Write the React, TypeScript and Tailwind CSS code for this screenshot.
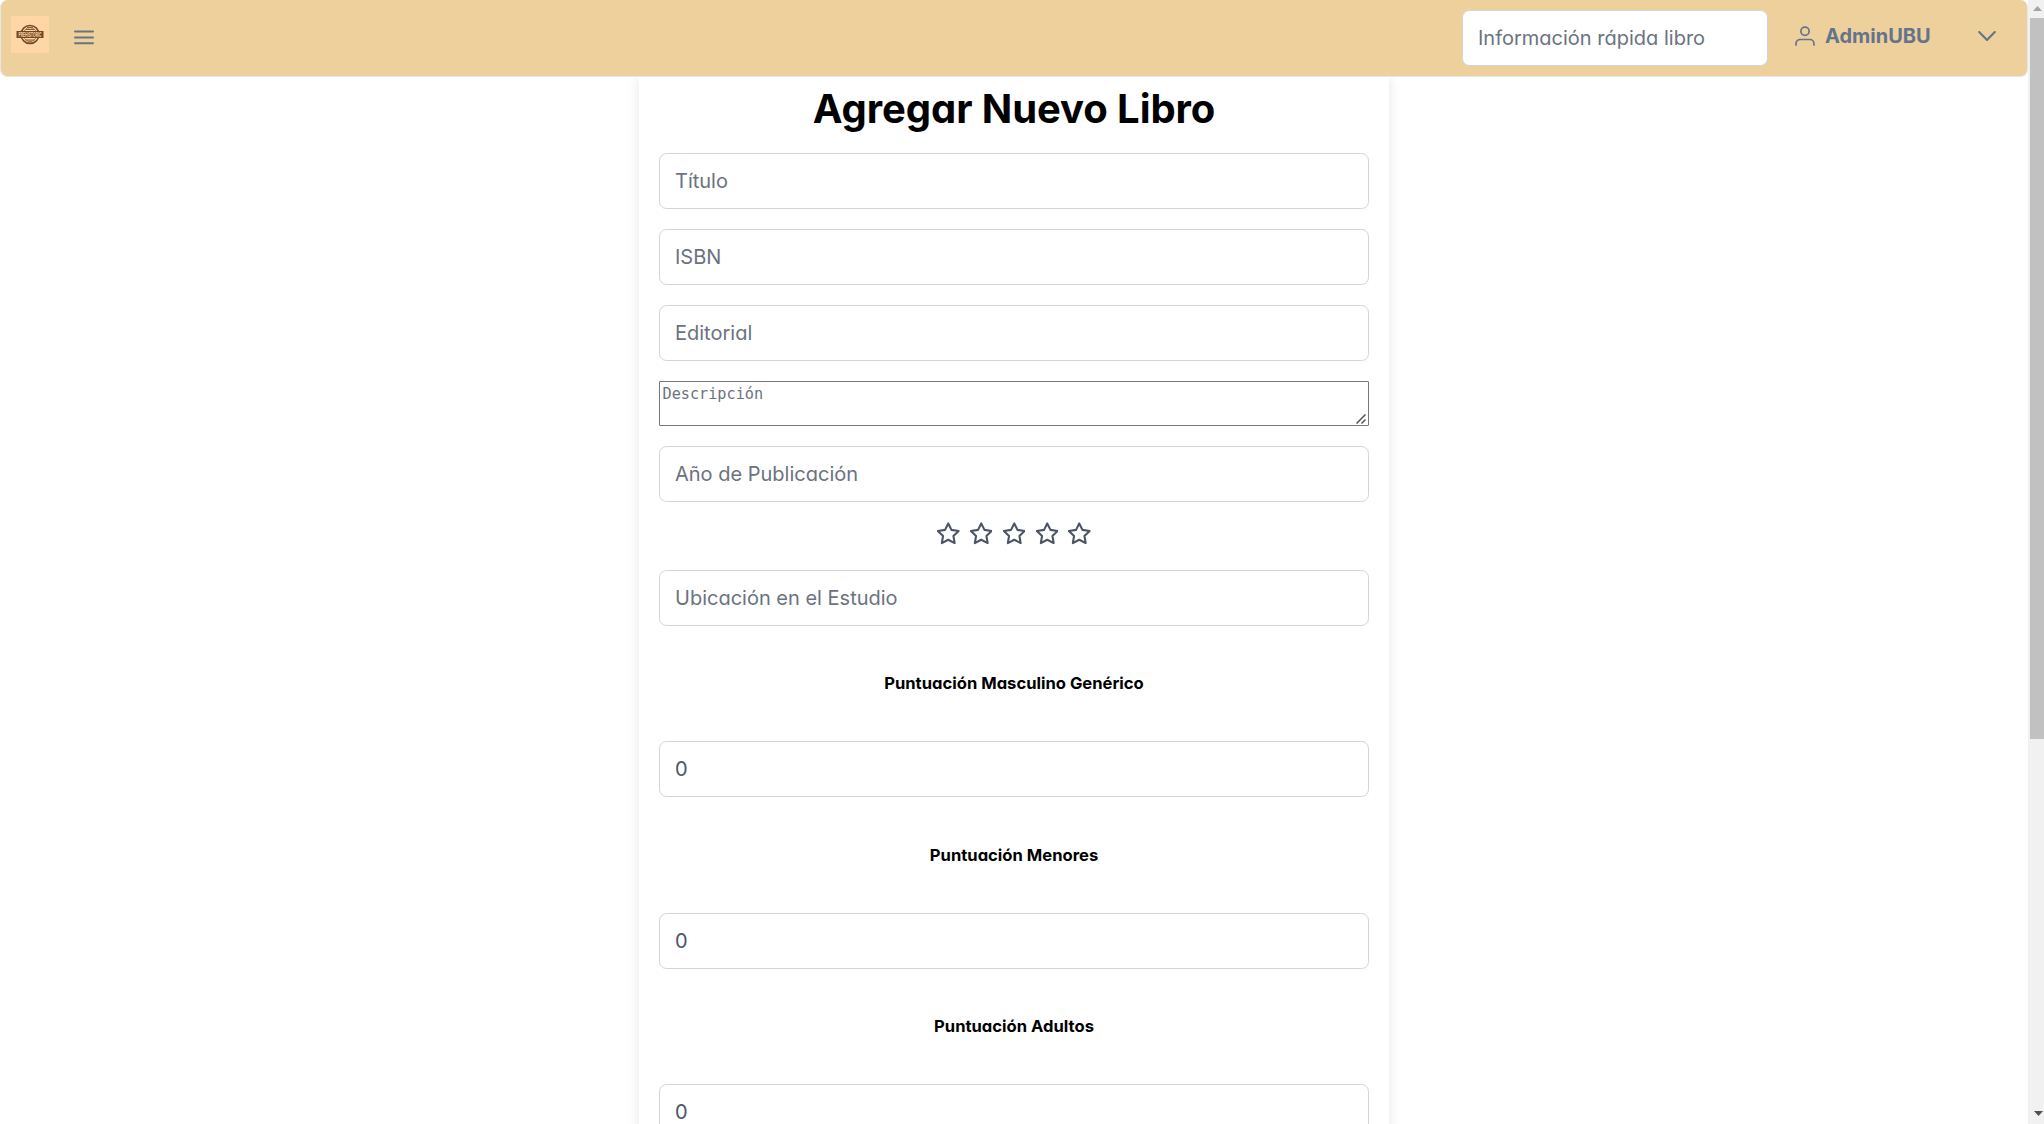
import React from "react";

const inputClass =
  "block h-14 w-full rounded-[7.5px] border border-[#d1d5db] bg-white px-[15px] text-[20px] leading-6 text-[#4b5563] placeholder:text-[#6b7280] outline-none";

function Star() {
  return (
    <svg className="size-[22.5px]" viewBox="0 0 14 14" fill="none" stroke="#4b5563" strokeWidth="1.3" strokeLinejoin="round">
      <path d="M7 .9 9 4.9l4.45.65-3.22 3.13.76 4.42L7 11.02 3.01 13.1l.76-4.42L.55 5.55 5 4.9Z" />
    </svg>
  );
}

function Logo() {
  return (
    <svg className="h-[37px] w-[38px] bg-[#ffd6a5]" viewBox="0 0 38 37" fill="none">
      <circle cx="19" cy="18.5" r="9" stroke="#714625" strokeWidth="1.5" />
      <circle cx="19" cy="18.5" r="6.8" stroke="#a9784d" strokeWidth="1" />
      <path d="M14.5 13.5h9M16 11.5h6M14.5 24h9M17 26h4" stroke="#8a5b35" />
      <path d="M5.5 15h27v7h-27z" fill="#714625" />
      <text transform="translate(19 20.9) scale(.52 1)" textAnchor="middle" fontSize="6.6" fontWeight="700" fill="#ffd6a5">
        PREHISTORIC
      </text>
    </svg>
  );
}

function Header() {
  return (
    <header className="flex h-[77px] w-full shrink-0 items-center rounded-[7.5px] border border-t-0 border-[#e5e7eb] bg-[#eed09d] pb-px text-[#64748b]">
      <div className="mb-[6px] ml-[10px]">
        <Logo />
      </div>
      <svg className="ml-[24.5px] mt-[-2px] h-[20px] w-[20px]" viewBox="0 0 20 20" fill="none" stroke="#6b7280" strokeWidth="2" strokeLinecap="round">
        <path d="M1 4.5h18M1 10.4h18M1 16.2h18" />
      </svg>
      <input className={inputClass + " ml-auto max-w-[306px]"} placeholder="Información rápida libro" />
      <svg className="mb-[3px] ml-[27px] h-[20px] w-[20px]" viewBox="0 0 20 20" fill="none" stroke="currentColor" strokeWidth="1.7" strokeLinecap="round">
        <circle cx="10" cy="5.3" r="4.1" />
        <path d="M1 19v-1.3c0-2.3 1.8-4.2 4.2-4.2h9.6c2.4 0 4.2 1.9 4.2 4.2V19" />
      </svg>
      <span className="mb-[3px] ml-[10px] w-[106px] text-[20px] font-bold leading-6">AdminUBU</span>
      <svg className="mb-[3px] ml-[47px] mr-[31px] h-[18px] w-[18px]" viewBox="0 0 18 18" fill="none" stroke="currentColor" strokeWidth="2.1" strokeLinecap="round" strokeLinejoin="round">
        <path d="m1.2 5 7.8 8 7.8-8" />
      </svg>
    </header>
  );
}

function Score({ label, tall }: { label: string; tall?: boolean }) {
  return (
    <>
      <h5 className={(tall ? "h-[116px]" : "h-[115px] pb-[2px]") + " flex items-center justify-center text-[16.6px] font-bold leading-5 text-black"}>
        {label}
      </h5>
      <input className={inputClass} defaultValue="0" />
    </>
  );
}

function Scrollbar() {
  return (
    <div className="flex h-full w-4 shrink-0 flex-col bg-[#f1f1f1]">
      <svg className="h-[18px] w-4 shrink-0" viewBox="0 0 16 18">
        <path d="M5 11h9L9.5 6Z" fill="#a3a3a3" />
      </svg>
      <div className="ml-[2px] h-[721px] bg-[#c1c1c1]" />
      <svg className="mt-auto h-[18px] w-4 shrink-0" viewBox="0 0 16 18">
        <path d="M6 5h9l-4.5 5Z" fill="#505050" />
      </svg>
    </div>
  );
}

export default function App() {
  return (
    <div className="flex h-[1124px] w-[2044px] overflow-hidden bg-white font-['Inter',sans-serif] [font-feature-settings:'cv02','cv03','cv04','cv11']">
      <div className="flex h-full w-[2028px] flex-col overflow-hidden">
        <Header />
        <div className="min-h-0 flex-1 overflow-hidden">
          <main className="mx-auto h-[1300px] w-[750px] px-5 shadow-[0_0_12.5px_rgba(0,0,0,0.1)]">
            <h1 className="flex h-[76px] items-center justify-center pb-[13px] text-[40px] font-bold leading-[48px] tracking-[-0.07px] text-black">
              Agregar Nuevo Libro
            </h1>
            <div className="flex flex-col gap-5">
              <input className={inputClass} placeholder="Título" />
              <input className={inputClass} placeholder="ISBN" />
              <input className={inputClass} placeholder="Editorial" />
              <div className="relative">
                <textarea
                  className="block h-[45px] w-full resize-none rounded-[1px] border border-[#767676] bg-white px-[2.5px] pt-[1.5px] font-['DejaVu_Sans_Mono',monospace] text-[15.2px] leading-5 placeholder:text-[#6b7280]"
                  placeholder="Descripción"
                />
                <svg className="absolute bottom-[2px] right-[3px] size-[10px]" viewBox="0 0 10 10" fill="none" stroke="#555" strokeWidth="1.5">
                  <path d="m.5 9.5 9-9M5.5 9.5l4-4" />
                </svg>
              </div>
              <input className={inputClass} placeholder="Año de Publicación" />
            </div>
            <div className="flex h-[68px] items-center justify-center gap-[10.3px] pb-[5px]">
              <Star />
              <Star />
              <Star />
              <Star />
              <Star />
            </div>
            <input className={inputClass} placeholder="Ubicación en el Estudio" />
            <Score label="Puntuación Masculino Genérico" />
            <Score label="Puntuación Menores" tall />
            <Score label="Puntuación Adultos" />
          </main>
        </div>
      </div>
      <Scrollbar />
    </div>
  );
}
